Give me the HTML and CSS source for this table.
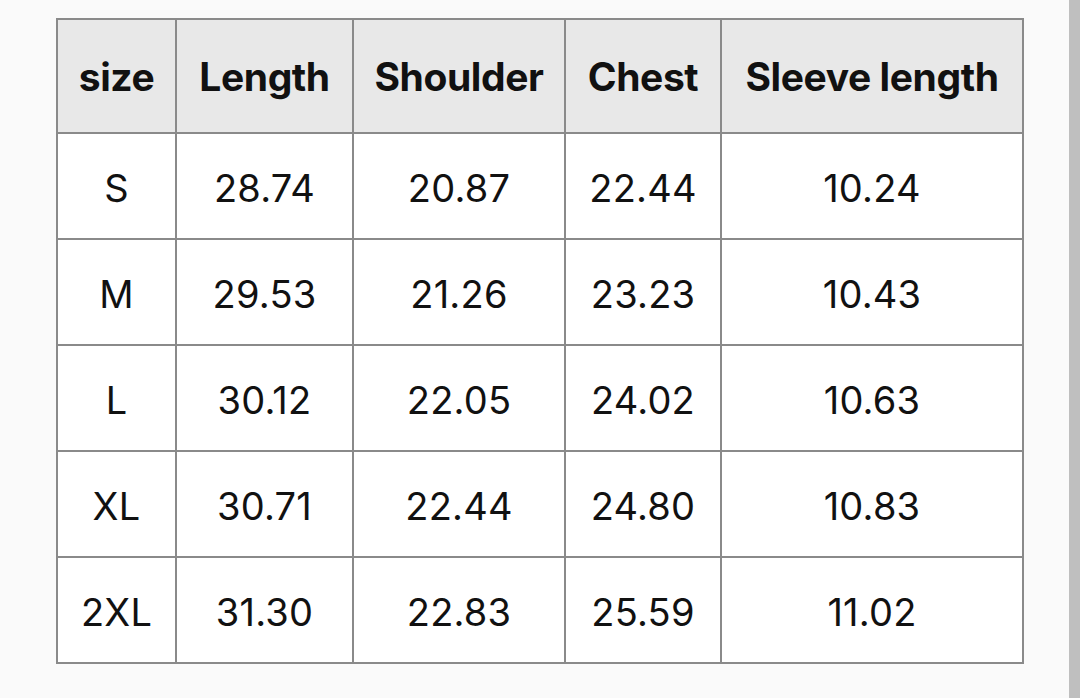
FILE: index.html
```html
<!DOCTYPE html>
<html>
<head>
<meta charset="utf-8">
<link rel="stylesheet" href="styles.css">
</head>
<body>
<div class="page">
  <main class="content">
    <table class="sizes">
      <colgroup>
        <col class="c1"><col class="c2"><col class="c3"><col class="c4"><col class="c5">
      </colgroup>
      <thead>
        <tr><th>size</th><th>Length</th><th>Shoulder</th><th>Chest</th><th>Sleeve length</th></tr>
      </thead>
      <tbody>
        <tr><td>S</td><td>28.74</td><td>20.87</td><td>22.44</td><td>10.24</td></tr>
        <tr><td>M</td><td>29.53</td><td>21.26</td><td>23.23</td><td>10.43</td></tr>
        <tr><td>L</td><td>30.12</td><td>22.05</td><td>24.02</td><td>10.63</td></tr>
        <tr><td>XL</td><td>30.71</td><td>22.44</td><td>24.80</td><td>10.83</td></tr>
        <tr><td>2XL</td><td>31.30</td><td>22.83</td><td>25.59</td><td>11.02</td></tr>
      </tbody>
    </table>
  </main>
  <div class="scrollbar"></div>
</div>
</body>
</html>
```
FILE: styles.css
```css
html, body {
  margin: 0;
  padding: 0;
  background: #fafafa;
}
.page {
  display: flex;
  width: 1080px;
  height: 698px;
  overflow: hidden;
}
.content {
  flex: 1;
  padding: 18px 0 0 56px;
}
.scrollbar {
  width: 11px;
  background: #bfbfbf;
}
.sizes {
  border-collapse: collapse;
  table-layout: fixed;
  width: 966px;
  font-family: Inter, "Noto Sans", sans-serif;
  color: #111;
  background: #fff;
}
.c1 { width: 119px; }
.c2 { width: 177px; }
.c3 { width: 212px; }
.c4 { width: 156px; }
.c5 { width: 302px; }
.sizes th, .sizes td {
  border: 2px solid #8a8a8a;
  text-align: center;
  padding: 0;
  white-space: nowrap;
}
.sizes th {
  background: #e8e8e8;
  height: 112px;
  font-size: 39px;
  font-weight: 700;
  letter-spacing: -0.4px;
}
.sizes td {
  height: 100px;
  padding-top: 4px;
  font-size: 38px;
  font-weight: 400;
  letter-spacing: 0.2px;
}
```
